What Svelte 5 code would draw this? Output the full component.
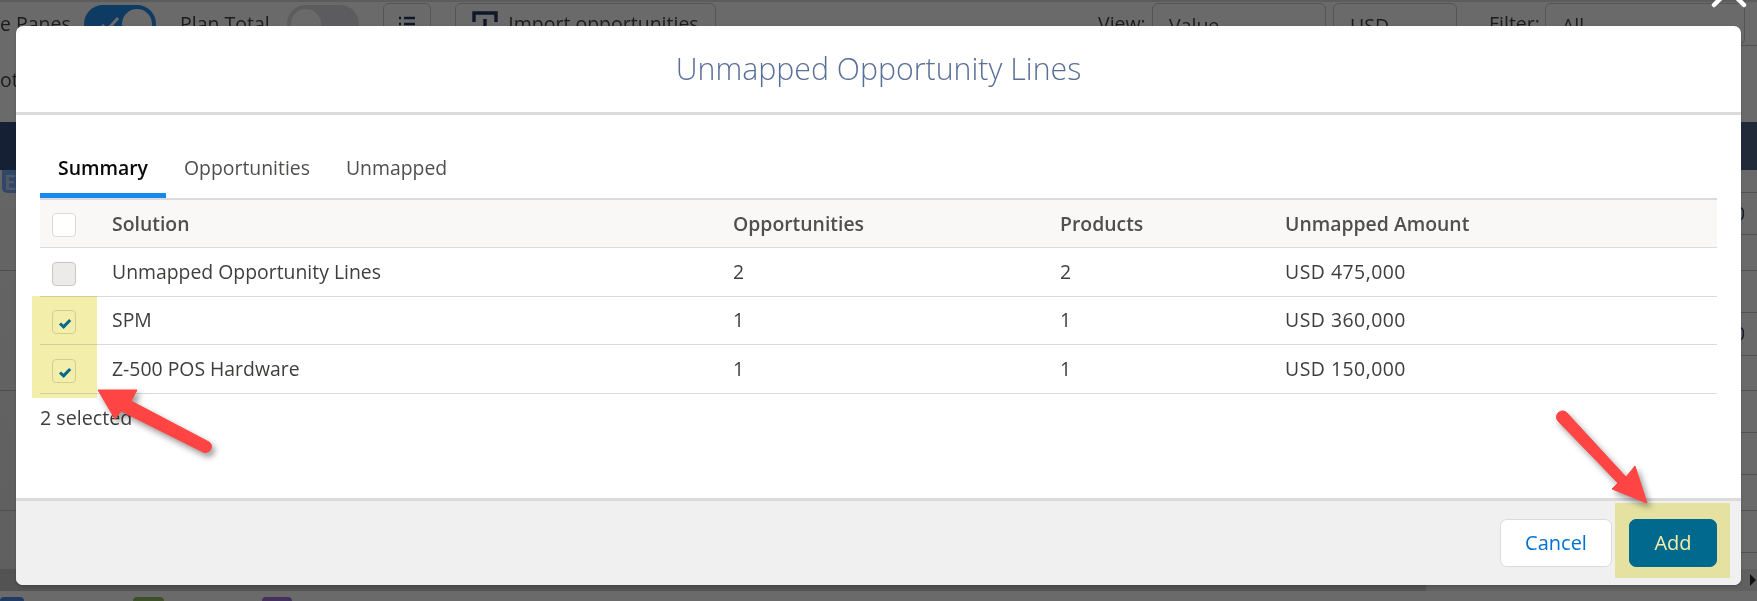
<script>
  const rightRows = [
    { h: 23 }, { h: 42, v: '0' }, { h: 36 }, { h: 42 }, { h: 43, v: '0' }, { h: 35 },
    { h: 42 }, { h: 42 }, { h: 36 }, { h: 42 }, { h: 16 }
  ];
  const leftRows = [101, 120, 120, 58];
  const rows = [
    { name: 'Unmapped Opportunity Lines', opp: 2, prod: 2, amt: 'USD 475,000', state: 'disabled', h: 49 },
    { name: 'SPM', opp: 1, prod: 1, amt: 'USD 360,000', state: 'checked', h: 48 },
    { name: 'Z-500 POS Hardware', opp: 1, prod: 1, amt: 'USD 150,000', state: 'checked', h: 49 }
  ];
</script>

<div class="page">
  <div class="toolbar">
    <div class="row-one">
      <span class="lbl first">e Panes</span>
      <span class="toggle on"><svg viewBox="0 0 24 24" width="24" height="24"><path d="M4 13l5 5L20 6" fill="none" stroke="#fff" stroke-width="3"/></svg><i></i></span>
      <span class="lbl plan">Plan Total</span>
      <span class="toggle off"><i></i></span>
      <span class="tbtn list">
        <svg viewBox="0 0 20 20" width="20" height="20"><path d="M2 4h2M7 4h11M2 10h2M7 10h11M2 16h2M7 16h11" stroke="#16325c" stroke-width="2.4" fill="none"/></svg>
      </span>
      <span class="tbtn import">
        <svg viewBox="0 0 26 26" width="26" height="26"><path d="M2 11V2h22v9M13 8v18" stroke="#16325c" stroke-width="3.4" fill="none"/></svg>
        Import opportunities
      </span>
      <span class="lbl view">View:</span>
      <span class="sel value">Value<b></b></span>
      <span class="sel usd">USD<b></b></span>
      <span class="lbl filter">Filter:</span>
      <span class="sel all">All</span>
    </div>
    <div class="row-two">
      <span class="lbl">ot</span>
      <span class="rule"></span>
    </div>
  </div>
  <div class="navy"></div>
  <div class="panes">
    <div class="left-pane">
      {#each leftRows as h, i}
        <div class="left-row" style="height:{h}px">
          {#if i === 0}<span class="badge">E</span>{/if}
        </div>
      {/each}
    </div>
    <div class="right-pane">
      {#each rightRows as r}
        <div class="right-row" style="height:{r.h}px">{r.v ?? ''}</div>
      {/each}
    </div>
  </div>
  <div class="scrollbar">
    <div class="thumb"></div>
    <div class="track"><span class="arrow"></span></div>
  </div>
  <div class="dock">
    <span class="chip blue"></span>
    <span class="chip green"></span>
    <span class="chip purple"></span>
  </div>

  <div class="scrim"></div>
  <svg class="close" viewBox="0 0 40 20" width="40" height="20"><path d="M3 5L18 -10M33 5L18 -10" stroke="#fff" stroke-width="4.5" stroke-linecap="round" fill="none"/></svg>

  <div class="modal">
    <header class="m-head"><h2>Unmapped Opportunity Lines</h2></header>
    <div class="m-body">
      <div class="tabs">
        <span class="tab active">Summary</span>
        <span class="tab">Opportunities</span>
        <span class="tab">Unmapped</span>
      </div>
      <div class="grid head">
        <span class="cb-cell"><span class="cb"></span></span>
        <span>Solution</span>
        <span>Opportunities</span>
        <span>Products</span>
        <span>Unmapped Amount</span>
      </div>
      {#each rows as r}
        <div class="grid body" style="height:{r.h}px">
          <span class="cb-cell">
            <span class="cb {r.state}">
              {#if r.state === 'checked'}
                <svg viewBox="0 0 24 24" width="24" height="24"><path d="M7 12.5l3.6 3.4L17.2 9" fill="none" stroke="#0070d2" stroke-width="3"/></svg>
              {/if}
            </span>
          </span>
          <span>{r.name}</span>
          <span>{r.opp}</span>
          <span>{r.prod}</span>
          <span class="amt">{r.amt}</span>
        </div>
      {/each}
      <div class="count">2 selected</div>
    </div>
    <footer class="m-foot">
      <button class="btn cancel">Cancel</button>
      <button class="btn add">Add</button>
    </footer>
  </div>

  <div class="hl hl-a"></div>
  <div class="hl hl-b"></div>
  <svg class="arrows" viewBox="0 0 1757 601" width="1757" height="601">
    <g fill="#ff4444" stroke="#ff4444" stroke-linejoin="round">
      <path d="M98 390L137 390L131 401L209 442A5.5 5.5 0 0 1 207 452Q205 453 203 452L121 411L115 419Z" stroke-width="1"/>
      <path d="M1647 503L1635 466L1626 477L1567 413A5.5 5.5 0 0 0 1558 421L1618 483L1612 489Z" stroke-width="1"/>
    </g>
  </svg>
</div>

<style>
  :global(body) { margin: 0; background: #fff; }
  .page {
    position: relative;
    width: 1757px;
    height: 601px;
    overflow: hidden;
    display: flex;
    flex-direction: column;
    font-family: "Open Sans", "Lato", sans-serif;
    color: #3e3e3c;
    background: #fff;
  }
  .toolbar { height: 122px; border-top: 2px solid #dcdcdc; box-sizing: border-box; }
  .row-one {
    height: 42px;
    margin-top: 1px;
    display: flex;
    align-items: center;
    font-size: 19.5px;
    line-height: 44px;
    white-space: nowrap;
  }
  .row-two { height: 77px; display: flex; justify-content: space-between; font-size: 19.5px; line-height: 70px; }
  .rule { width: 16px; height: 1px; background: #c4c4c4; }
  .lbl { display: block; }
  .first { width: 84px; }
  .plan { margin-left: 24px; width: 107px; }
  .toggle {
    width: 72px; height: 38px; border-radius: 19px; box-sizing: border-box;
    display: flex; align-items: center; justify-content: space-between; padding: 4px;
  }
  .toggle i { display: block; width: 30px; height: 30px; border-radius: 50%; background: #fff; }
  .toggle.on { background: #1589ee; margin-left: 0; padding-left: 14px; }
  .toggle.off { background: #dadbe1; }
  .tbtn {
    height: 42px; border: 1px solid #c9c7c5; border-radius: 6px; box-sizing: border-box;
    display: flex; align-items: center; justify-content: center;
  }
  .list { width: 48px; margin-left: 24px; }
  .import { width: 261px; margin-left: 24px; gap: 10px; }
  .view { margin-left: 382px; width: 54px; }
  .sel {
    position: relative; height: 42px; border: 1px solid #c9c7c5; border-radius: 6px;
    box-sizing: border-box; padding-left: 16px; display: block;
  }
  .sel b {
    position: absolute; right: 10px; top: 20px; width: 9px; height: 9px;
    border-right: 2px solid #3e3e3c; border-bottom: 2px solid #3e3e3c; transform: rotate(45deg);
  }
  .value { width: 174px; }
  .usd { width: 124px; margin-left: 7px; }
  .filter { margin-left: 32px; width: 56px; }
  .all { width: 200px; }
  .navy { height: 48px; background: linear-gradient(90deg, #28467a, #485f85); flex: none; }
  .panes { height: 399px; display: flex; flex: none; }
  .left-pane { width: 800px; background: linear-gradient(#f3f3f3, #e4e4e4); }
  .left-row { box-sizing: border-box; border-bottom: 1px solid #b8b8b8; }
  .left-row:last-child { border-bottom: 0; }
  .badge {
    display: flex; align-items: center; justify-content: flex-end;
    margin-left: 2px; width: 14px; height: 23px; box-sizing: border-box;
    background: #6ea8ff; color: #c4d4ea; border-radius: 0 0 0 5px;
    font: bold 20px "Lato", sans-serif; overflow: hidden;
  }
  .right-pane { flex: 1; }
  .right-row {
    box-sizing: border-box; border-bottom: 1px solid #c0c0c0; text-align: right;
    padding-right: 12px; font-size: 18px; line-height: 40px; color: #16325c;
  }
  .right-row:last-child { border-bottom: 0; }
  .scrollbar { height: 22px; display: flex; flex: none; }
  .thumb { width: 1426px; background: #c5c5c5; }
  .track { flex: 1; background: #e6e6e6; display: flex; justify-content: flex-end; align-items: center; padding-right: 1px; }
  .arrow { width: 0; height: 0; border-left: 6px solid #222; border-top: 6px solid transparent; border-bottom: 6px solid transparent; }
  .dock { height: 10px; display: flex; align-items: flex-end; }
  .chip { height: 4px; border-radius: 4px 4px 0 0; display: block; }
  .blue { width: 24px; background: #4187ed; }
  .green { width: 31px; margin-left: 109px; background: #8fbe5c; }
  .purple { width: 30px; margin-left: 98px; background: #9b6ede; }
  .scrim { position: absolute; inset: 0; background: rgba(8, 7, 7, 0.6); }
  .close { position: absolute; left: 1711px; top: 0; }

  .modal {
    position: absolute; left: 16px; top: 26px; width: 1725px; height: 559px;
    background: #fff; border-radius: 7px; overflow: hidden;
    display: flex; flex-direction: column;
    box-shadow: 0 2px 3px rgba(0, 0, 0, 0.16);
  }
  .m-head {
    height: 89px; box-sizing: border-box; flex: none;
    border-bottom: 3px solid #dddbda;
    display: flex; justify-content: center; align-items: center; padding-bottom: 2px;
  }
  h2 { margin: 0; font-size: 30.3px; font-weight: 300; color: #5a6f98; }
  .m-body { flex: 1; padding: 0 24px; display: flex; flex-direction: column; }
  .tabs {
    height: 85px; box-sizing: border-box; flex: none; padding-top: 25px;
    display: flex; border-bottom: 2px solid #dddbda;
  }
  .tab { height: 58px; box-sizing: border-box; padding: 0 18px; font-size: 19.4px; line-height: 56px; color: #514f4d; margin-bottom: -2px; }
  .tab.active { color: #080707; font-weight: 600; border-bottom: 5px solid #1589ee; }
  .grid {
    display: grid; grid-template-columns: 72px 621px 327px 225px 432px;
    align-items: center; box-sizing: border-box; border-bottom: 1.5px solid #dddbda;
    font-size: 19.4px; flex: none;
  }
  .head { height: 48px; background: #f9f8f6; font-weight: 600; color: #514f4d; }
  .body { padding-bottom: 2px; }
  .amt { letter-spacing: 0.5px; }
  .cb-cell { display: flex; padding-left: 12px; padding-top: 3px; }
  .body .cb-cell { padding-top: 5px; }
  .cb { width: 24px; height: 24px; box-sizing: border-box; border: 1px solid #dddbda; border-radius: 4px; background: #fff; display: block; }
  .cb.disabled { background: #ecebea; border-color: #c9c7c5; }
  .count { font-size: 19.7px; margin-top: 10px; }
  .m-foot {
    height: 87px; box-sizing: border-box; flex: none; background: #f0f0f0;
    border-top: 3px solid #dddbda; display: flex; justify-content: flex-end; gap: 17px;
    padding: 18px 24px 0 0;
  }
  .btn { height: 48px; border-radius: 7px; font: 20px "Open Sans", sans-serif; box-sizing: border-box; padding: 0 0 2px; }
  .cancel { width: 112px; background: #fff; border: 1px solid #dddbda; color: #0070d2; }
  .add { width: 88px; background: #0070d2; border: 1px solid #0070d2; color: #fff; }
  .hl { position: absolute; background: #f3efab; mix-blend-mode: multiply; }
  .hl-a { left: 32px; top: 296px; width: 65px; height: 102px; }
  .hl-b { left: 1615px; top: 503px; width: 115px; height: 75px; }
  .arrows { position: absolute; left: 0; top: 0; filter: drop-shadow(3px 4px 3px rgba(0, 0, 0, 0.4)); }
</style>
